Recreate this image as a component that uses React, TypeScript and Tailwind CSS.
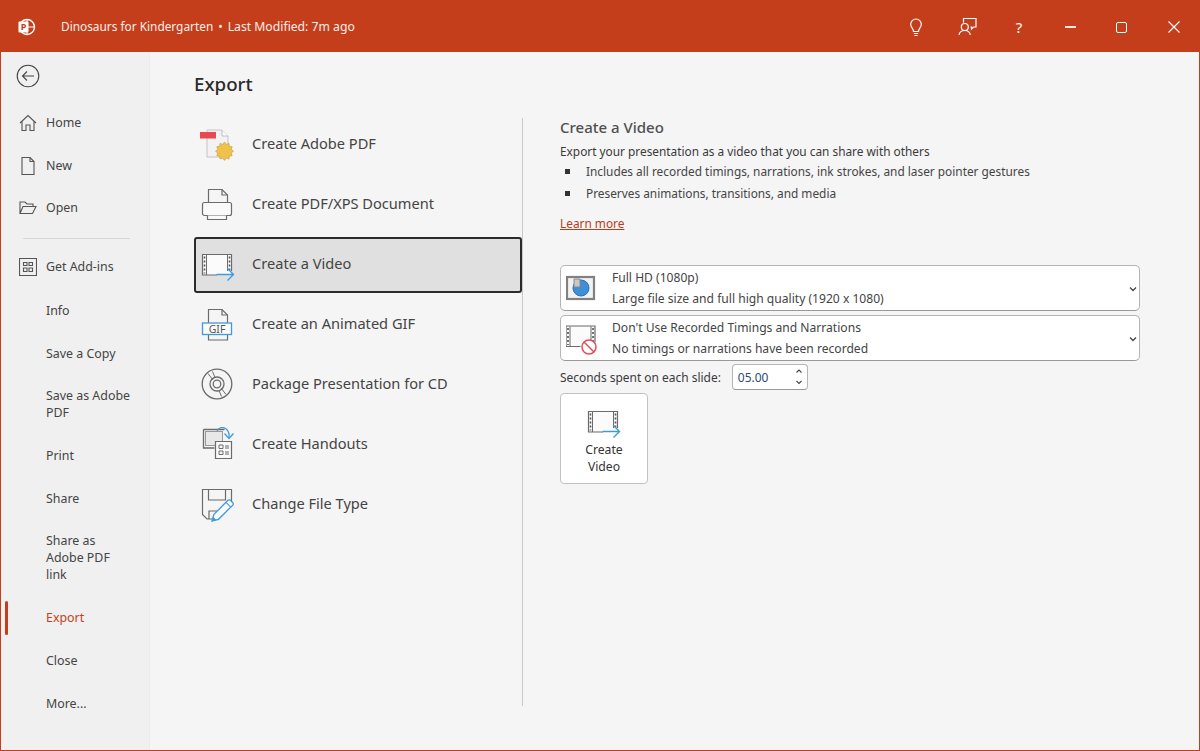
import React from "react";

const F = "font-['Noto_Sans','Open_Sans',sans-serif]";

function Film({ x = 0, y = 0 }: { x?: number; y?: number }) {
  return (
    <g transform={`translate(${x} ${y})`}>
      <rect x="2.5" y="7.5" width="29" height="20.5" fill="#fbfbfb" stroke="none" />
      <path d="M17 28H2.5V7.500h29V24" fill="none" stroke="#6b6b6b" strokeWidth="1.2" />
      <path d="M6.500 8v20M27.500 8v16" stroke="#6b6b6b" strokeWidth="1" fill="none" />
      <path d="M4.500 9.500v17M29.500 9.500v14" stroke="#555" strokeWidth="1.6" strokeDasharray="2 2" fill="none" />
    </g>
  );
}

function ArrowBlue({ x = 0, y = 0 }: { x?: number; y?: number }) {
  return (
    <path transform={`translate(${x} ${y})`} d="M16.500 27.500h17M27.500 21.500l6 6-6 6" fill="none" stroke="#3f9bdc" strokeWidth="1.4" />
  );
}

const I = ({ children }: { children: React.ReactNode }) => (
  <svg width="36" height="36" viewBox="0 0 36 36" className="shrink-0">{children}</svg>
);

const G = "#6b6b6b";

const exportItems: { label: string; icon: React.ReactNode; active?: boolean }[] = [
  {
    label: "Create Adobe PDF",
    icon: (
      <I>
        <path d="M7 3h15l6 6v21H7z" fill="#f2f2f2" stroke="#c4c4c4" strokeWidth="1" />
        <path d="M22 3v6h6" fill="#fff" stroke="#bdbdbd" />
        <rect x="0" y="5" width="16" height="6.500" fill="#e8484f" />
        <path d="M24.500 15l1.800 2.400 2.700-1 .3 2.900 2.900.4-1 2.700 2.300 1.800-2.300 1.800 1 2.700-2.900.4-.3 2.900-2.700-1-1.800 2.400-1.800-2.400-2.700 1-.3-2.900-2.900-.4 1-2.700-2.300-1.800 2.300-1.800-1-2.700 2.900-.4.3-2.900 2.700 1z" fill="#f0c24b" stroke="#c9952a" strokeWidth=".6" />
      </I>
    ),
  },
  {
    label: "Create PDF/XPS Document",
    icon: (
      <I>
        <path d="M8.500 15V2.500H22l5.500 5.500v7" fill="none" stroke={G} strokeWidth="1.2" />
        <path d="M22 2.500V8h5.500" fill="none" stroke={G} strokeWidth="1.2" />
        <rect x="2.500" y="15.500" width="29" height="13" rx="2" fill="#fafafa" stroke={G} strokeWidth="1.2" />
        <path d="M7.500 28.500v4h19v-4" fill="#fafafa" stroke={G} strokeWidth="1.2" />
      </I>
    ),
  },
  {
    label: "Create a Video",
    active: true,
    icon: (
      <I>
        <Film />
        <ArrowBlue />
      </I>
    ),
  },
  {
    label: "Create an Animated GIF",
    icon: (
      <I>
        <path d="M8.500 16V2.500H22l5.500 5.500v8M8.500 28v5h19v-5" fill="none" stroke={G} strokeWidth="1.2" />
        <path d="M22 2.500V8h5.500" fill="none" stroke={G} strokeWidth="1.2" />
        <rect x="2.500" y="16" width="29" height="11.500" fill="#fafafa" stroke="#3f9bdc" strokeWidth="1.3" />
        <text x="17" y="25.500" textAnchor="middle" fontSize="10.500" fill="#555" fontFamily="Noto Sans, sans-serif">GIF</text>
      </I>
    ),
  },
  {
    label: "Package Presentation for CD",
    icon: (
      <I>
        <circle cx="17" cy="17" r="14.800" fill="none" stroke={G} strokeWidth="1.3" />
        <circle cx="17" cy="17" r="7" fill="none" stroke={G} strokeWidth="1.3" />
        <circle cx="17" cy="17" r="3.800" fill="none" stroke={G} strokeWidth="1.3" />
        <path d="M8 6.500l5 6.500M26 27.500l-5-6.500M12.500 4.500l2.500 6M21.500 29.500l-2.500-6" stroke={G} strokeWidth="1" fill="none" />
      </I>
    ),
  },
  {
    label: "Create Handouts",
    icon: (
      <I>
        <g transform="translate(0 -3)">
          <path d="M3.500 5.500h21M3.500 5.500v18.500h11" fill="none" stroke={G} strokeWidth="1.3" />
          <rect x="5.500" y="7.500" width="17" height="14" fill="#e8e8e8" stroke="#999" strokeWidth="1" />
          <path d="M15.500 17.500h16v17h-16z" fill="#fafafa" stroke={G} strokeWidth="1.2" />
          <path d="M19 21h4v3.500h-4zM19 27h4v3.500h-4z" fill="none" stroke={G} strokeWidth="1" />
          <path d="M25 22h4M25 24h4M25 28h4M25 30h4" stroke={G} strokeWidth="1" />
          <path d="M17 7c2-4.500 10-5.500 12 3v3" fill="none" stroke="#3f9bdc" strokeWidth="1.3" />
          <path d="M24.500 9.500l4.500 5 4.500-5" fill="none" stroke="#3f9bdc" strokeWidth="1.3" />
        </g>
      </I>
    ),
  },
  {
    label: "Change File Type",
    icon: (
      <I>
        <path d="M12 32H7l-4.500-4.500V2.500h29v13M8.500 2.500V13h17V2.500M9 32v-8h10" fill="none" stroke={G} strokeWidth="1.2" />
        <path d="M12 34l1.800-6.500L28 13.300a1.600 1.600 0 0 1 2.300 0l2.500 2.500a1.600 1.600 0 0 1 0 2.300L18.500 32.300z" fill="#fafafa" stroke="#3f9bdc" strokeWidth="1.3" />
        <path d="M12 34l1.200-4.300 3 3z" fill="#3f9bdc" />
        <path d="M26 15.300l5 5" stroke="#3f9bdc" strokeWidth="1.100" />
      </I>
    ),
  },
];

function NavRow({ label, icon, className = "h-[43px]", active }: { label: React.ReactNode; icon?: React.ReactNode; className?: string; active?: boolean }) {
  return (
    <div className={`relative flex items-center ${className}`}>
      {active && <div className="absolute left-[4px] top-[5px] bottom-[4px] w-[3px] rounded-sm bg-[#c43e1c]" />}
      <div className="w-[45px] shrink-0 flex justify-center pl-[9px]">{icon}</div>
      <div className={`text-[12.4px] leading-[17px] w-[90px] pb-[1px] ${active ? "text-[#c43e1c]" : "text-[#444]"}`}>{label}</div>
    </div>
  );
}

const ni = "fill-none stroke-[#555]";

function Dropdown({ icon, a, b }: { icon: React.ReactNode; a: string; b: string }) {
  return (
    <div className="flex items-center h-[46px] w-[580px] rounded-[5px] bg-white border border-[#b5b5b5] border-b-[#999] pl-[5px]">
      <div className="w-[46px] shrink-0">{icon}</div>
      <div className="flex-1 text-[12.1px] leading-[21px] text-[#444]">
        <div>{a}</div>
        <div>{b}</div>
      </div>
      <svg width="10" height="10" viewBox="0 0 10 10" className="mr-[1px] mt-[1px]"><path d="M2 3.500l3 3 3-3" fill="none" stroke="#444" strokeWidth="1.3" /></svg>
    </div>
  );
}

export default function App() {
  return (
    <div className={`${F} w-[1200px] h-[751px] flex flex-col overflow-hidden bg-[#c43e1c] px-[1px] pb-[1px]`}>
      <header className="h-[52px] shrink-0 -mx-[1px] flex items-center text-white">
        <svg width="20" height="20" viewBox="0 0 20 20" className="ml-[17px] mr-[24px] mt-[2px]">
          <circle cx="10" cy="10" r="7.500" fill="none" stroke="#fff" strokeWidth="1.400" />
          <path d="M10 2.500v7.500h7.500M10 10v7.500" fill="none" stroke="#fff" strokeWidth="1" />
          <rect x="1.500" y="4.500" width="10" height="11" rx="1" fill="#fff" />
          <text x="6.500" y="13.300" textAnchor="middle" fontSize="9" fontWeight="700" fill="#c43e1c" fontFamily="Noto Sans, sans-serif">P</text>
        </svg>
        <div className="text-[11.85px] flex-1 text-[#fbeee9] pt-[2px] flex items-center">
          <span>Dinosaurs for Kindergarten</span>
          <span className="mx-[5px]">•</span>
          <span className="text-[12.2px]">Last Modified: 7m ago</span>
        </div>
        <div className="flex items-center pt-[2px]">
          <svg width="20" height="20" viewBox="0 0 20 20" className="mr-[32px]" fill="none" stroke="#fff" strokeWidth="1.200">
            <path d="M7.500 14.500c0-3-2.800-3.700-2.800-7.200a5.300 5.300 0 0 1 10.600 0c0 3.500-2.800 4.200-2.800 7.200z" />
            <path d="M7.800 16.500h4.400M8.500 18.500h3" />
          </svg>
          <svg width="20" height="20" viewBox="0 0 20 20" className="mr-[36px]" fill="none" stroke="#fff" strokeWidth="1.200">
            <path d="M5.500 5.500V1.500h12.500v8.500h-2.500l-2 2v-2h-1" />
            <circle cx="6.800" cy="10" r="3.500" />
            <path d="M1 18c.5-3 3-4.500 5.800-4.500s5 1.500 5.500 4.500" />
          </svg>
          <span className="mr-[41px] text-[15px] leading-none w-[10px] text-center">?</span>
          <div className="w-[11px] h-[1.500px] bg-[#fbe4dc] mr-[40px]" />
          <div className="w-[11px] h-[11px] rounded-[2px] border border-white mr-[41px]" />
          <svg width="12" height="12" viewBox="0 0 12 12" className="mr-[20px]"><path d="M.500.500l11 11M11.500.500l-11 11" stroke="#fff" strokeWidth="1.100" /></svg>
        </div>
      </header>

      <div className="flex-1 flex min-h-0 bg-[#f5f5f5]">
        <nav className="w-[149px] shrink-0 bg-[#f0f0f0] border-r border-[#ebebeb]">
          <div className="h-[49px] pl-[15px] pt-[12px]">
            <svg width="24" height="24" viewBox="0 0 24 24" fill="none" stroke="#444" strokeWidth="1.100">
              <circle cx="12" cy="12" r="10.800" />
              <path d="M18 12H6.500M11 7.500L6.500 12l4.500 4.500" />
            </svg>
          </div>
          <NavRow label="Home" icon={
            <svg width="18" height="18" viewBox="0 0 18 18" className={ni} strokeWidth="1.100"><path d="M1 9L9 1.500 17 9M3 7.500V16.500h4V11h4v5.500h4V7.500" /></svg>
          } />
          <NavRow label="New" icon={
            <svg width="18" height="18" viewBox="0 0 18 18" className={ni} strokeWidth="1.100"><path d="M3 .500h8l4 4v13H3zM11 .500v4h4" /></svg>
          } />
          <NavRow label="Open" className="h-[42px]" icon={
            <svg width="18" height="18" viewBox="0 0 18 18" className={ni} strokeWidth="1.100"><path d="M1 14.500V3h5l2 2h6v2.500M1 14.500h12.500l3.500-7H4z" /></svg>
          } />
          <div className="h-[16px] flex items-center"><div className="ml-[22px] w-[107px] h-[1px] bg-[#d8d8d8] mt-[2px]" /></div>
          <NavRow label="Get Add-ins" className="h-[44px]" icon={
            <svg width="18" height="18" viewBox="0 0 18 18" className={ni} strokeWidth="1.100"><path d="M.500.500h17v17H.500zM4.500 4.500h3.500v3H4.500zM10 4.500h3.500v3H10zM4.500 10h3.500v3.500H4.500zM10 10h3.500v3.500H10z" /></svg>
          } />
          <NavRow label="Info" />
          <NavRow label="Save a Copy" />
          <NavRow label={<>Save as Adobe PDF</>} className="h-[59px]" />
          <NavRow label="Print" />
          <NavRow label="Share" />
          <NavRow label={<>Share as<br />Adobe PDF<br />link</>} className="h-[76px]" />
          <NavRow label="Export" active />
          <NavRow label="Close" />
          <NavRow label="More..." />
        </nav>

        <main className="flex-1 min-w-0 flex flex-col pl-[44px]">
          <h1 className="h-[64px] pt-[18px] text-[18.7px] leading-[28px] font-medium text-[#2b2b2b]">Export</h1>
          <div className="flex items-start">
            <div className="w-[329px] shrink-0 flex flex-col gap-[4px] h-[588px] border-r border-[#c9c9c9] mt-[2px]">
              {exportItems.map((it) => (
                <div
                  key={it.label}
                  className={`flex items-center h-[56px] -mt-[1px] mb-[1px] gap-[16px] rounded-[3px] text-[14.6px] text-[#444] ${
                    it.active ? "w-[328px] bg-[#e0e0e0] border-2 border-[#2b2b2b] pl-[4px]" : "pl-[6px]"
                  }`}
                >
                  {it.icon}
                  <span className="pb-[2px]">{it.label}</span>
                </div>
              ))}
            </div>
            <section className="ml-[37px] mt-[1px] text-[11.85px] text-[#444] w-[580px]">
              <h2 className="text-[15px] leading-[20px] font-medium text-[#505050]">Create a Video</h2>
              <p className="mt-[4px] leading-[20px] text-[#3a3a3a]">Export your presentation as a video that you can share with others</p>
              <ul className="leading-[20px] -mt-[1px]">
                <li className="flex items-center h-[22px]"><span className="w-[5px] h-[5px] bg-[#333] ml-[5px] mr-[16px]" />Includes all recorded timings, narrations, ink strokes, and laser pointer gestures</li>
                <li className="flex items-center h-[22px]"><span className="w-[5px] h-[5px] bg-[#333] ml-[5px] mr-[16px]" />Preserves animations, transitions, and media</li>
              </ul>
              <a className="block mt-[9px] leading-[20px] text-[#b83b1b] underline">Learn more</a>
              <div className="mt-[32px] flex flex-col gap-[4px]">
                <Dropdown
                  a="Full HD (1080p)"
                  b="Large file size and full high quality (1920 x 1080)"
                  icon={
                    <svg width="34" height="34" viewBox="0 0 34 34">
                      <rect x="1" y="6" width="27" height="22" fill="#f2f2f2" stroke="#808080" strokeWidth="2.200" />
                      <circle cx="15" cy="17" r="8" fill="#3f8fd6" stroke="#2670b8" />
                      <path d="M14 16V8h-6v8z" fill="#c8c8c8" stroke="#888" />
                    </svg>
                  }
                />
                <Dropdown
                  a="Don't Use Recorded Timings and Narrations"
                  b="No timings or narrations have been recorded"
                  icon={
                    <svg width="34" height="36" viewBox="0 0 34 36">
                      <Film x="-2.500" y="-1.500" />
                      <circle cx="23" cy="27" r="7" fill="#fff" stroke="#e84d55" strokeWidth="1.500" />
                      <path d="M18 22l10 10" stroke="#e84d55" strokeWidth="1.500" />
                    </svg>
                  }
                />
              </div>
              <div className="flex items-center mt-[3px] h-[26px] text-[#3a3a3a] text-[11.95px]">
                <span className="pt-[1px]">Seconds spent on each slide:</span>
                <div className="relative ml-[11px] w-[76px] h-[26px] rounded-[4px] bg-white border border-[#b5b5b5] border-b-[#999] pl-[5px] leading-[24px] text-[#2b4a7a] pt-[1px]">
                  05.00
                  <svg width="10" height="18" viewBox="0 0 10 18" className="absolute right-[3px] top-[3px]" fill="none" stroke="#444" strokeWidth="1.100">
                    <path d="M2.500 4.500L5 2l2.500 2.500M2.500 13L5 15.500 7.500 13" />
                  </svg>
                </div>
              </div>
              <button className="mt-[3px] w-[88px] h-[91px] rounded-[4px] bg-white border border-[#c2c2c2] flex flex-col items-center pt-[14px] text-[12.2px] leading-[17px] text-[#333]">
                <svg width="36" height="30" viewBox="0 -2 36 30" className="-mb-[3px]">
                  <Film y="-6" />
                  <ArrowBlue y="-6" />
                </svg>
                <span className="mt-[6px]">Create<br />Video</span>
              </button>
            </section>
          </div>
        </main>
      </div>
    </div>
  );
}
